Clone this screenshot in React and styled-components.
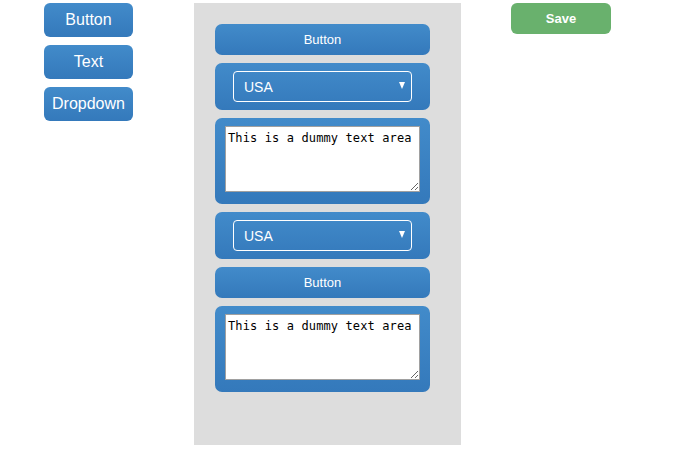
import React from "react";
import styled, { createGlobalStyle } from "styled-components";

const Global = createGlobalStyle`
  html, body { margin: 0; padding: 0; background: #ffffff; }
  body { font-family: "Liberation Sans", Arial, sans-serif; }
`;

const blue = "linear-gradient(to bottom, #428bca 0%, #3479bb 100%)";

const Page = styled.div`
  display: flex;
  align-items: flex-start;
  padding: 3px 0 0 44px;
`;

const Palette = styled.div`
  display: flex;
  flex-direction: column;
  gap: 8px;
  width: 89px;
`;

const PaletteButton = styled.button`
  height: 34px;
  border: none;
  border-radius: 6px;
  background: ${blue};
  color: #fff;
  font-family: "Liberation Sans", Arial, sans-serif;
  font-size: 16px;
  padding: 0;
  cursor: pointer;
`;

const Canvas = styled.div`
  margin-left: 61px;
  width: 267px;
  height: 442px;
  box-sizing: border-box;
  background: #dddddd;
  padding: 21px 0 0 21px;
  display: flex;
  flex-direction: column;
  gap: 8px;
`;

const Block = styled.div`
  width: 215px;
  box-sizing: border-box;
  border-radius: 7px;
  background: ${blue};
  padding: ${(p) => p.$pad};
`;

const BlockButton = styled.button`
  width: 215px;
  height: 31px;
  border: none;
  border-radius: 7px;
  background: ${blue};
  color: #fff;
  font-family: "Liberation Sans", Arial, sans-serif;
  font-size: 13px;
  padding: 0;
`;

const SelectWrap = styled.div`
  position: relative;
  height: 31px;
`;

const Select = styled.select`
  appearance: none;
  -webkit-appearance: none;
  width: 100%;
  height: 31px;
  box-sizing: border-box;
  border: 1px solid #ffffff;
  border-radius: 4px;
  background: transparent;
  color: #fff;
  font-family: "Liberation Sans", Arial, sans-serif;
  font-size: 14px;
  padding: 0 0 0 10px;
  outline: none;
  option { color: #000; }
`;

const Arrow = styled.span`
  position: absolute;
  right: 7px;
  top: 11px;
  width: 0;
  height: 0;
  border-left: 3.5px solid transparent;
  border-right: 3.5px solid transparent;
  border-top: 7px solid #ffffff;
  pointer-events: none;
`;

const TextArea = styled.textarea`
  display: block;
  width: 195px;
  height: 66px;
  box-sizing: border-box;
  border: 1px solid #a0a0a0;
  background: #fff;
  color: #000;
  font-family: "DejaVu Sans Mono", "Liberation Mono", monospace;
  font-size: 12px;
  letter-spacing: 0.12px;
  line-height: 15px;
  padding: 4px 2px 2px;
  margin: 0;
  outline: none;
`;

const SaveButton = styled.button`
  margin-left: 50px;
  width: 100px;
  height: 31px;
  border: none;
  border-radius: 6px;
  background: #69b16d;
  color: #fff;
  font-family: "Liberation Sans", Arial, sans-serif;
  font-size: 13px;
  font-weight: bold;
  padding: 0;
`;

function Dropdown() {
  return (
    <Block $pad="8px 18px">
      <SelectWrap>
        <Select defaultValue="USA">
          <option>USA</option>
          <option>Canada</option>
        </Select>
        <Arrow />
      </SelectWrap>
    </Block>
  );
}

function TextBlock() {
  return (
    <Block $pad="8px 10px 12px">
      <TextArea defaultValue="This is a dummy text area" />
    </Block>
  );
}

export default function App() {
  return (
    <>
      <Global />
      <Page>
        <Palette>
          <PaletteButton>Button</PaletteButton>
          <PaletteButton>Text</PaletteButton>
          <PaletteButton>Dropdown</PaletteButton>
        </Palette>
        <Canvas>
          <BlockButton>Button</BlockButton>
          <Dropdown />
          <TextBlock />
          <Dropdown />
          <BlockButton>Button</BlockButton>
          <TextBlock />
        </Canvas>
        <SaveButton>Save</SaveButton>
      </Page>
    </>
  );
}
